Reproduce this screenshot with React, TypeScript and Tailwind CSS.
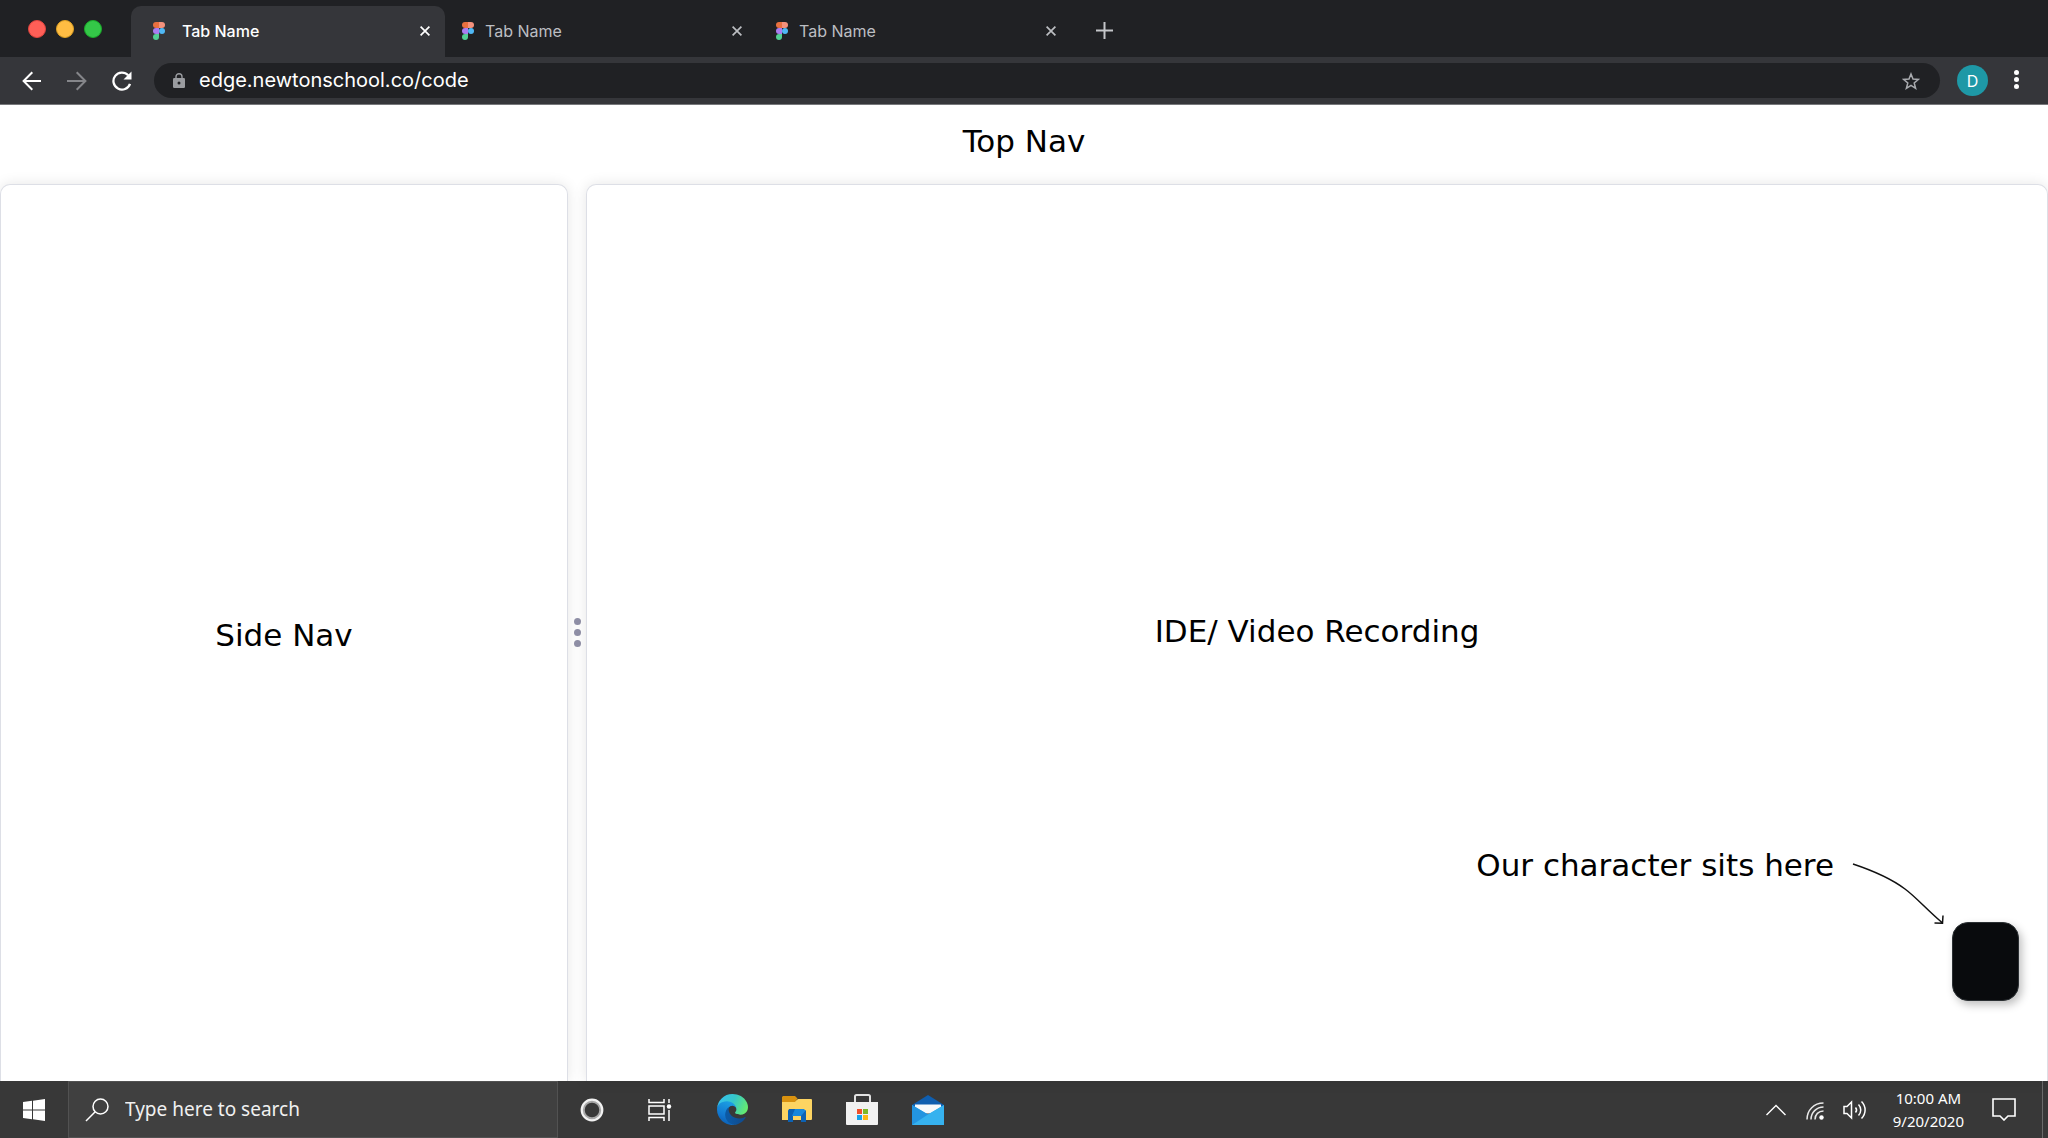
import clsx from 'clsx'
import type { ReactNode } from 'react'

const TABS = [
  { id: 1, title: 'Tab Name', active: true },
  { id: 2, title: 'Tab Name', active: false },
  { id: 3, title: 'Tab Name', active: false },
]

function FigmaIcon() {
  return (
    <svg viewBox="0 0 12 18" className="h-[18px] w-3 shrink-0" aria-hidden>
      <path d="M3 0h3v6H3a3 3 0 0 1 0-6z" fill="#e8703f" />
      <path d="M6 0h3a3 3 0 0 1 0 6H6z" fill="#f4917c" />
      <path d="M3 6h3v6H3a3 3 0 0 1 0-6z" fill="#a97df0" />
      <circle cx="9" cy="9" r="3" fill="#4fb8f5" />
      <path d="M3 12h3v3a3 3 0 1 1-3-3z" fill="#53cf95" />
    </svg>
  )
}

function CloseIcon() {
  return (
    <svg viewBox="0 0 10 10" className="size-[10px]" aria-hidden>
      <path d="M.6.6l8.8 8.8M9.4.6L.6 9.4" stroke="currentColor" strokeWidth="1.7" />
    </svg>
  )
}

function TabStrip() {
  return (
    <div className="flex h-[57px] items-end bg-[#202124]">
      <div className="flex h-full w-[131px] shrink-0 items-center gap-[10px] pl-7">
        <button aria-label="Close window" className="size-[18px] rounded-full border border-[#e0443e] bg-[#ff5f57]" />
        <button aria-label="Minimize window" className="size-[18px] rounded-full border border-[#dea123] bg-[#ffbd43]" />
        <button aria-label="Zoom window" className="size-[18px] rounded-full border border-[#1aab29] bg-[#34c748]" />
      </div>
      {TABS.map((tab) => (
        <div
          key={tab.id}
          className={clsx(
            'flex h-[51px] w-[314px] min-w-0 items-center rounded-t-[10px] pb-[2px]',
            tab.active ? 'bg-[#35363a] pr-[15px] pl-[22px] text-white' : 'pr-[17px] pl-[17px] text-[#bcbec2]'
          )}
        >
          <FigmaIcon />
          <button
            className={clsx(
              'min-w-0 flex-1 truncate text-left text-base',
              tab.active ? 'ml-[17px] font-medium' : 'ml-[11px]'
            )}
          >
            {tab.title}
          </button>
          <button aria-label="Close tab" className="shrink-0">
            <CloseIcon />
          </button>
        </div>
      ))}
      <button aria-label="New tab" className="ml-[23px] flex h-[51px] items-center pb-[2px] text-[#c4c6c9]">
        <svg viewBox="0 0 17 17" className="size-[17px]" aria-hidden>
          <path d="M8.5 0v17M0 8.5h17" stroke="currentColor" strokeWidth="2" />
        </svg>
      </button>
    </div>
  )
}

function Toolbar() {
  return (
    <div className="flex h-12 items-center border-b border-[#77787b] bg-[#35363a]">
      <div className="flex w-[154px] shrink-0 items-center gap-[25px] pl-[22px] text-white">
        <button aria-label="Back">
          <svg viewBox="0 0 20 20" className="size-5" fill="none" stroke="currentColor" strokeWidth="2" aria-hidden>
            <path d="M19 10H2M10.300 1.300L1.600 10l8.700 8.700" />
          </svg>
        </button>
        <button aria-label="Forward" className="text-[#85868a]">
          <svg viewBox="0 0 20 20" className="size-5" fill="none" stroke="currentColor" strokeWidth="2" aria-hidden>
            <path d="M0 10h18M9.700 1.300L18.400 10l-8.700 8.700" />
          </svg>
        </button>
        <button aria-label="Reload">
          <svg viewBox="0 0 20 20" className="size-5" fill="none" aria-hidden>
            <path d="M16.200 4.300A8.500 8.500 0 1 0 18 12.800" stroke="currentColor" strokeWidth="2.300" />
            <path d="M19.500.500v8h-8z" fill="currentColor" />
          </svg>
        </button>
      </div>
      <label className="flex h-[35px] min-w-0 flex-1 items-center rounded-full bg-[#202124] pr-5 pl-[19px]">
        <svg viewBox="0 0 12 15" className="h-[15px] w-3 shrink-0" aria-hidden>
          <path d="M3 6V3.700a3 3 0 0 1 6 0V6" fill="none" stroke="#9a9ca0" strokeWidth="1.400" />
          <rect y="5" width="12" height="10" rx="1.200" fill="#9a9ca0" />
          <circle cx="6" cy="10" r="1.500" fill="#202124" />
        </svg>
        <input
          aria-label="Address"
          defaultValue="edge.newtonschool.co/code"
          className="ml-[14px] min-w-0 flex-1 bg-transparent pb-[2px] text-xl text-white outline-none"
        />
        <button aria-label="Bookmark this tab">
          <svg viewBox="0 0 18 18" className="size-[18px]" fill="none" stroke="#a9abaf" strokeWidth="1.500" aria-hidden>
            <path d="M9 2l2 5.100 5.400.3-4.200 3.500 1.400 5.400L9 13.300l-4.600 3 1.400-5.400L1.600 7.400 7 7.100z" />
          </svg>
        </button>
      </label>
      <button className="ml-[17px] flex size-[31px] items-center justify-center rounded-full bg-[#1e98a6] text-base text-white">
        D
      </button>
      <button aria-label="Menu" className="mr-[29px] ml-[26px] flex flex-col items-center gap-[2px] pb-[2px]">
        <span className="size-[5px] rounded-full bg-white" />
        <span className="size-[5px] rounded-full bg-white" />
        <span className="size-[5px] rounded-full bg-white" />
      </button>
    </div>
  )
}

function Label({ children }: { children: ReactNode }) {
  return (
    <span className="font-['DejaVu_Sans',cursive] text-[31px] leading-9 whitespace-nowrap text-black">{children}</span>
  )
}

function Workspace() {
  return (
    <div className="flex min-h-0 flex-1">
      <aside className="flex w-[568px] shrink-0 items-center justify-center rounded-t-[10px] border border-b-0 border-[#dddfe6] bg-white pt-1 shadow-[0_0_14px_rgba(0,0,0,0.1)]">
        <Label>Side Nav</Label>
      </aside>
      <button aria-label="Resize panels" className="flex w-[18px] shrink-0 flex-col items-center justify-center gap-1">
        <span className="size-[7px] rounded-full bg-[#9090a7]" />
        <span className="size-[7px] rounded-full bg-[#9090a7]" />
        <span className="size-[7px] rounded-full bg-[#9090a7]" />
      </button>
      <main className="relative flex min-w-0 flex-1 items-center justify-center rounded-t-[10px] border border-b-0 border-[#dddfe6] bg-white pb-1 shadow-[0_0_14px_rgba(0,0,0,0.1)]">
        <Label>IDE/ Video Recording</Label>
        <div className="absolute right-7 bottom-20 flex items-start">
          <Label>Our character sits here</Label>
          <svg viewBox="0 0 94 64" className="mt-4 ml-[18px] h-16 w-[94px]" fill="none" stroke="#111" strokeWidth="1.500" aria-hidden>
            <path d="M1 1C22 8 41 17 53 26C64 34 76 48 90 59.500M82.500 60l8 .300L91 52.500" />
          </svg>
          <div className="mt-[75px] ml-[6px] h-[79px] w-[67px] rounded-2xl border border-[#2b3033] bg-[#090b0d] shadow-[3px_4px_8px_rgba(0,0,0,0.25)]" />
        </div>
      </main>
    </div>
  )
}

function WindowsIcon() {
  return (
    <svg viewBox="0 0 22 22" className="size-[22px]" fill="#fff" aria-hidden>
      <path d="M0 3.100l9-1.300v8.700H0zM10 1.700L22 0v10.500H10zM0 11.500h9v8.700l-9-1.300zM10 11.500h12V22l-12-1.700z" />
    </svg>
  )
}

function TaskViewIcon() {
  return (
    <svg viewBox="0 0 25 22" className="h-[22px] w-[25px]" fill="none" stroke="#fff" strokeWidth="1.500" aria-hidden>
      <path d="M1 0v3.500h15V0M1 22v-3.500h15V22M1 7h15v8H1zM21 0v4M21 11v11" />
      <circle cx="21" cy="7.500" r="2.200" fill="#fff" stroke="none" />
    </svg>
  )
}

function EdgeIcon() {
  return (
    <svg viewBox="0 0 256 256" className="size-[31px]" aria-hidden>
      <defs>
        <linearGradient id="edgeDark" x1="0.2" y1="0.5" x2="1" y2="0.6">
          <stop offset="0" stopColor="#0c59a4" />
          <stop offset="1" stopColor="#114a8b" />
        </linearGradient>
        <linearGradient id="edgeBlue" x1="0.6" y1="0.1" x2="0.3" y2="1">
          <stop offset="0" stopColor="#1b9de2" />
          <stop offset="0.6" stopColor="#1277cf" />
          <stop offset="1" stopColor="#0a5cb0" />
        </linearGradient>
        <linearGradient id="edgeGreen" x1="0" y1="0.3" x2="1" y2="0.6">
          <stop offset="0" stopColor="#35c1f1" />
          <stop offset="0.5" stopColor="#36c7c8" />
          <stop offset="1" stopColor="#66eb6e" />
        </linearGradient>
      </defs>
      <path
        fill="url(#edgeDark)"
        d="M231 190.500c-3.400 1.800-6.900 3.400-10.500 4.700a101.500 101.500 0 0 1-35.900 6.500c-47.300 0-88.500-32.500-88.500-74.300a31.500 31.500 0 0 1 16.400-27.300c-42.800 1.800-53.800 46.400-53.800 72.500 0 73.900 68.100 81.400 82.800 81.400 7.900 0 19.800-2.300 27-4.600l1.300-.400a128.300 128.300 0 0 0 66.600-52.800 4 4 0 0 0-5.400-5.700z"
      />
      <path
        fill="url(#edgeBlue)"
        d="M105.700 241.400a79.200 79.200 0 0 1-22.700-21.300 80.700 80.700 0 0 1 29.500-120c3.200-1.500 8.500-4.100 15.600-4a32.400 32.400 0 0 1 25.700 13 31.900 31.900 0 0 1 6.300 18.700c0-.2 24.500-79.600-80-79.600-43.900 0-80 41.700-80 78.200a130.200 130.200 0 0 0 12.100 56 128 128 0 0 0 156.400 67.100 75.500 75.500 0 0 1-62.800-8z"
      />
      <path
        fill="url(#edgeGreen)"
        d="M152.300 148.900c-.9 1-3.400 2.500-3.400 5.600 0 2.600 1.700 5.200 4.800 7.300 14.300 10 41.400 8.600 41.500 8.600a59.600 59.600 0 0 0 30.300-8.300 61.400 61.400 0 0 0 30.400-52.900c.3-22.400-8-37.300-11.300-43.900C223.500 23.900 177.700 0 128 0A128 128 0 0 0 0 126.200c.5-36.500 36.800-66 80-66 3.500 0 23.500.3 42 10.100 16.300 8.600 24.900 18.900 30.800 29.200 6.200 10.700 7.300 24.100 7.300 29.500s-2.700 13.300-7.800 19.900z"
      />
    </svg>
  )
}

function FolderIcon() {
  return (
    <svg viewBox="0 0 30 27" className="h-[27px] w-[30px]" aria-hidden>
      <path d="M0 6h12l4-3h13a1 1 0 0 1 1 1v19a1 1 0 0 1-1 1H0z" fill="#fcd462" />
      <path d="M1 0h12l2.500 2.500L13 6H0V1z" fill="#d9920f" />
      <path d="M6 15l2-2h14l2 2v11h-5v-6h-8v6H6z" fill="#1687dc" />
      <path d="M7 13h6l-3 7h1v6H6V15zM19 20l5-6v12h-5z" fill="#0c62b4" />
      <path d="M11 20h8v4h-8z" fill="#fcd462" />
    </svg>
  )
}

function StoreIcon() {
  return (
    <svg viewBox="0 0 32 31" className="h-[31px] w-8" aria-hidden>
      <path d="M9 8V2.500A1.500 1.500 0 0 1 10.500 1h12A1.500 1.500 0 0 1 24 2.500V8" fill="none" stroke="#e2e2e2" strokeWidth="2" />
      <path d="M0 8h32v22a1 1 0 0 1-1 1H1a1 1 0 0 1-1-1z" fill="#f1f1f1" />
      <path d="M11 15h5v5h-5z" fill="#f0502b" />
      <path d="M17 15h5v5h-5z" fill="#7cb928" />
      <path d="M11 21h5v5h-5z" fill="#16a2ea" />
      <path d="M17 21h5v5h-5z" fill="#fcb813" />
    </svg>
  )
}

function MailIcon() {
  return (
    <svg viewBox="0 0 32 30" className="h-[30px] w-8" aria-hidden>
      <path d="M0 10L16 0l16 10v6H0z" fill="#0f5eaf" />
      <path d="M3 9.500h26v9H3z" fill="#f7f9fb" />
      <path d="M0 10l16 9.500L32 10v19a1 1 0 0 1-1 1H1a1 1 0 0 1-1-1z" fill="#2aa8ea" />
      <path d="M0 10l16 9.500L32 29a1 1 0 0 1-1 1H1a1 1 0 0 1-1-1z" fill="#2394e0" />
      <path d="M32 10L16 19.500 32 30zM0 30l16-10.500L32 30z" fill="#36b2ef" />
    </svg>
  )
}

function Taskbar() {
  return (
    <footer className="flex h-[57px] shrink-0 items-center bg-[#383838] font-['Noto_Sans','Open_Sans',sans-serif] text-white">
      <button aria-label="Start" className="flex h-full w-[68px] shrink-0 items-center justify-center">
        <WindowsIcon />
      </button>
      <label className="flex h-full w-[490px] shrink-0 items-center border border-[#525252] bg-[#404040] pl-4">
        <svg viewBox="0 0 24 24" className="size-6 shrink-0" fill="none" stroke="#fff" strokeWidth="1.500" aria-hidden>
          <circle cx="15.500" cy="8.500" r="7.500" />
          <path d="M10.200 13.800L1 23" />
        </svg>
        <input
          type="text"
          aria-label="Search"
          placeholder="Type here to search"
          className="ml-4 min-w-0 flex-1 bg-transparent text-[19px] outline-none placeholder:text-[#f0f0f0]"
        />
      </label>
      <button aria-label="Cortana" className="ml-[22px]">
        <svg viewBox="0 0 24 24" className="size-6" fill="none" aria-hidden>
          <circle cx="12" cy="12" r="9" stroke="#a8a8a8" strokeWidth="3.500" />
          <circle cx="12" cy="12" r="10.300" stroke="#f2f2f2" strokeWidth="2.200" />
        </svg>
      </button>
      <button aria-label="Task view" className="ml-[44px]">
        <TaskViewIcon />
      </button>
      <div className="ml-11 flex items-center gap-[34px]">
        <button aria-label="Edge">
          <EdgeIcon />
        </button>
        <button aria-label="File Explorer">
          <FolderIcon />
        </button>
        <button aria-label="Store">
          <StoreIcon />
        </button>
        <button aria-label="Mail">
          <MailIcon />
        </button>
      </div>
      <div className="ml-auto flex h-full items-center">
        <button aria-label="Show hidden icons">
          <svg viewBox="0 0 20 12" className="h-3 w-5" fill="none" stroke="#fff" strokeWidth="1.400" aria-hidden>
            <path d="M.5 11L10 1.500 19.500 11" />
          </svg>
        </button>
        <button aria-label="Network" className="ml-5 pt-[2px]">
          <svg viewBox="0 0 18 18" className="size-[18px]" fill="none" stroke="#e8e8e8" strokeWidth="1.500" aria-hidden>
            <path d="M1 17.500C1 8 8 1 17.500 1M5 17.500C5 10.500 10.500 5 17.500 5M9 17.500C9 12.500 12.500 9 17.500 9" />
            <circle cx="15.500" cy="15.500" r="2.200" fill="#fff" stroke="none" />
          </svg>
        </button>
        <button aria-label="Volume" className="ml-[19px]">
          <svg viewBox="0 0 24 20" className="h-5 w-6" fill="none" stroke="#fff" strokeWidth="1.500" aria-hidden>
            <path d="M1 6.500h3L8.500 2v16L4 13.500H1zM12.500 7.500c1.300 1.500 1.300 3.500 0 5M15.500 4.500c3 3.200 3 7.800 0 11M18.500 1.500c4.800 5 4.800 12 0 17" />
          </svg>
        </button>
        <button className="ml-[26px] flex flex-col items-center text-[15px] leading-[23px]">
          <span>10:00 AM</span>
          <span>9/20/2020</span>
        </button>
        <button aria-label="Notifications" className="ml-7">
          <svg viewBox="0 0 24 23" className="h-[23px] w-6" fill="none" stroke="#fff" strokeWidth="1.600" aria-hidden>
            <path d="M1 1h22v17h-7l-4 4-4-4H1z" />
          </svg>
        </button>
        <button aria-label="Show desktop" className="ml-[26px] h-full w-[6px] border-l border-[#6a6a6a]" />
      </div>
    </footer>
  )
}

export default function App() {
  return (
    <div className="flex h-screen flex-col overflow-hidden bg-white font-['Inter','Liberation_Sans',sans-serif]">
      <header className="shrink-0">
        <TabStrip />
        <Toolbar />
      </header>
      <nav className="flex h-[79px] shrink-0 items-center justify-center pb-2">
        <Label>Top Nav</Label>
      </nav>
      <Workspace />
      <Taskbar />
    </div>
  )
}
